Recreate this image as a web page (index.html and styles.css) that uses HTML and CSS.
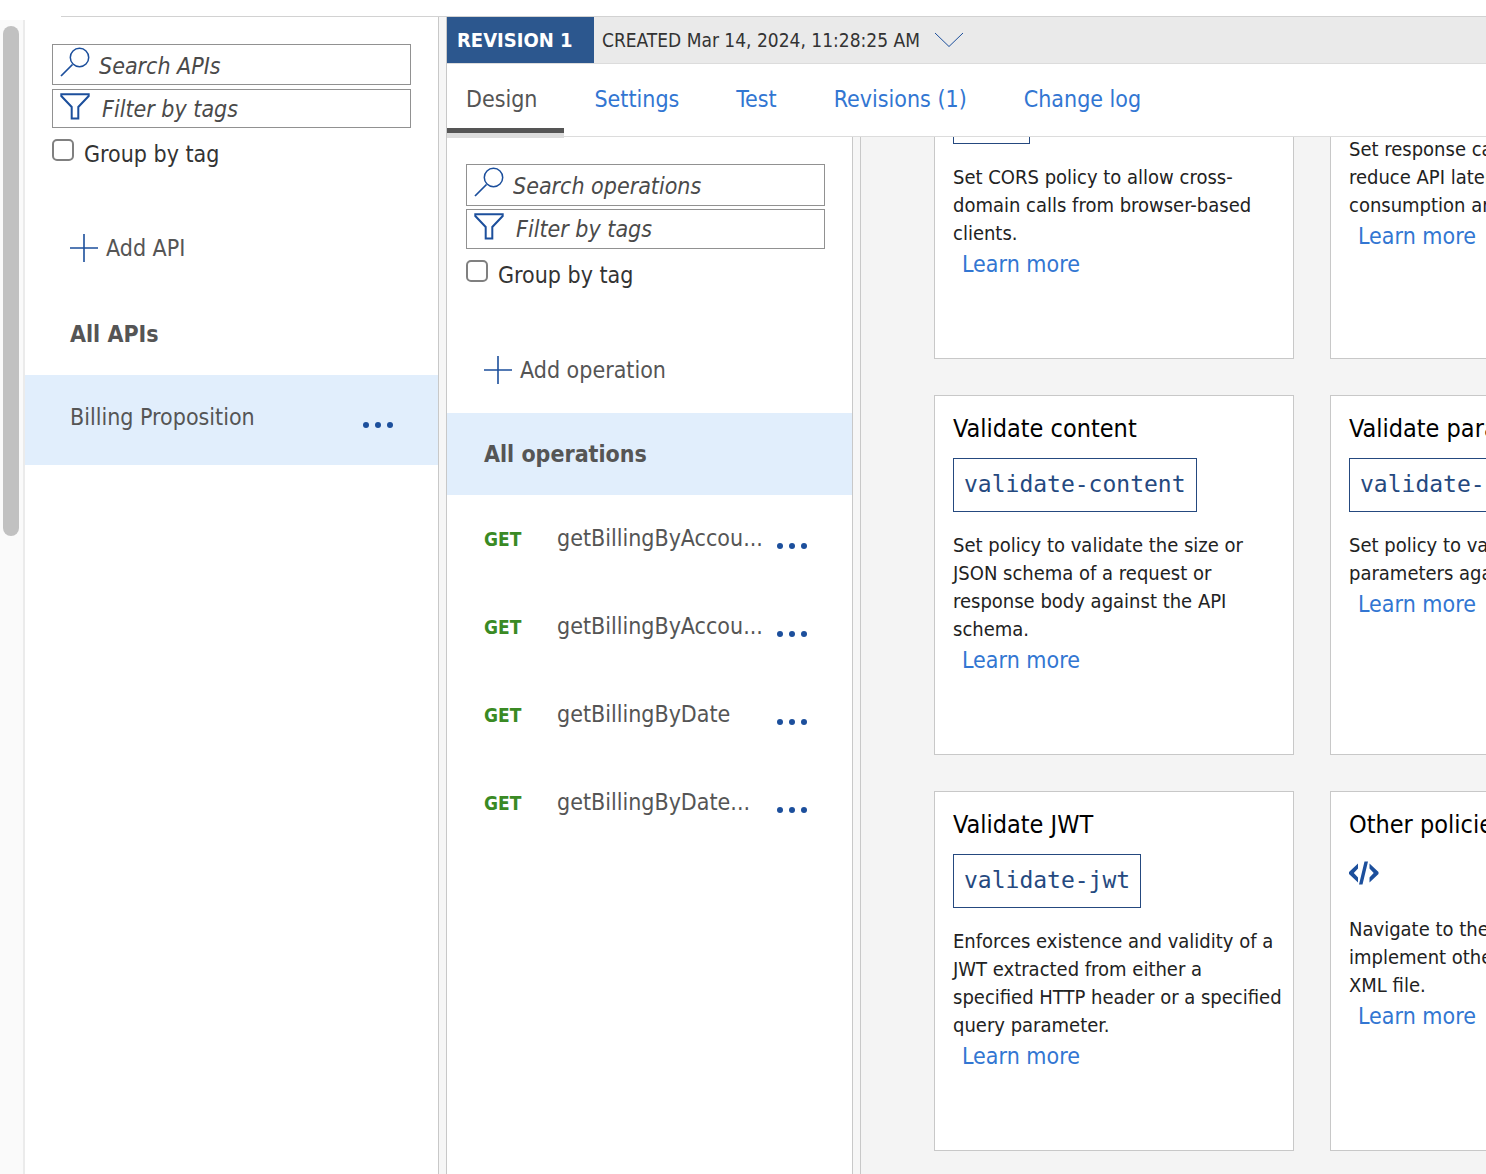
FILE: index.html
```
<!DOCTYPE html>
<html lang="en">
<head>
<meta charset="utf-8">
<title>API Management - APIs</title>
<link rel="stylesheet" href="styles.css">
</head>
<body>
<svg class="sprite" aria-hidden="true">
  <symbol id="search" viewBox="0 0 30 30"><path d="M1 29 12.500 17.500" stroke-width="1.700"/><circle cx="19.500" cy="10.500" r="9.200" stroke-width="1.500"/></symbol>
  <symbol id="filter" viewBox="0 0 30 30"><path d="M1.300 2.200H28.700V4L18.300 15V26.600H11.700V15L1.300 4Z" stroke-width="2"/></symbol>
  <symbol id="plus" viewBox="0 0 28 28"><path d="M14 0V28M0 14H28" stroke-width="1.600"/></symbol>
  <symbol id="dots" viewBox="0 0 30 6"><g class="fill"><circle cx="3" cy="3" r="3"/><circle cx="15" cy="3" r="3"/><circle cx="27" cy="3" r="3"/></g></symbol>
</svg>
<header class="topline"></header>
<div class="app">
  <div class="gutter"><div class="thumb"></div></div>
  <nav class="panel apis">
    <div class="filters">
      <label class="field"><svg class="icon"><use href="#search"/></svg><input type="text" placeholder="Search APIs" aria-label="Search APIs"></label>
      <label class="field tags"><svg class="icon"><use href="#filter"/></svg><input type="text" placeholder="Filter by tags" aria-label="Filter APIs by tags"></label>
      <label class="group"><input type="checkbox"><span>Group by tag</span></label>
    </div>
    <button class="add"><svg class="plus"><use href="#plus"/></svg>Add API</button>
    <a class="all" href="#">All APIs</a>
    <div class="row api selected"><a class="name" href="#">Billing Proposition</a><button class="more" aria-label="API actions"><svg><use href="#dots"/></svg></button></div>
  </nav>
  <div class="splitter"></div>
  <main class="main">
    <div class="revision">
      <strong>REVISION 1</strong>
      <button class="created">CREATED Mar 14, 2024, 11:28:25 AM <svg viewBox="0 0 30 16"><path d="M1 1 15 14.500 29 1" stroke-width="1"/></svg></button>
    </div>
    <div class="tabs">
      <a class="tab active" href="#">Design</a>
      <a class="tab" href="#">Settings</a>
      <a class="tab" href="#">Test</a>
      <a class="tab" href="#">Revisions (1)</a>
      <a class="tab" href="#">Change log</a>
    </div>
    <div class="work">
      <nav class="panel operations">
        <div class="filters">
          <label class="field"><svg class="icon"><use href="#search"/></svg><input type="text" placeholder="Search operations" aria-label="Search operations"></label>
          <label class="field tags"><svg class="icon"><use href="#filter"/></svg><input type="text" placeholder="Filter by tags" aria-label="Filter operations by tags"></label>
          <label class="group"><input type="checkbox"><span>Group by tag</span></label>
        </div>
        <button class="add"><svg class="plus"><use href="#plus"/></svg>Add operation</button>
        <a class="all selected" href="#">All operations</a>
        <div class="row"><span class="verb">GET</span><a class="name" href="#">getBillingByAccou...</a><button class="more" aria-label="Operation actions"><svg><use href="#dots"/></svg></button></div>
        <div class="row"><span class="verb">GET</span><a class="name" href="#">getBillingByAccou...</a><button class="more" aria-label="Operation actions"><svg><use href="#dots"/></svg></button></div>
        <div class="row"><span class="verb">GET</span><a class="name" href="#">getBillingByDate</a><button class="more" aria-label="Operation actions"><svg><use href="#dots"/></svg></button></div>
        <div class="row"><span class="verb">GET</span><a class="name" href="#">getBillingByDate...</a><button class="more" aria-label="Operation actions"><svg><use href="#dots"/></svg></button></div>
      </nav>
      <div class="splitter"></div>
      <section class="policies">
        <div class="cards">
          <article class="card">
            <h3>Allow cross-origin resource<br>sharing (CORS)</h3>
            <code>cors</code>
            <p>Set CORS policy to allow cross-<br>domain calls from browser-based<br>clients.</p>
            <a href="#">Learn more</a>
          </article>
          <article class="card">
            <h3>Cache responses</h3>
            <code>cache-lookup/store</code>
            <p>Set response caching policies to<br>reduce API latency, bandwidth<br>consumption and load times.</p>
            <a href="#">Learn more</a>
          </article>
          <article class="card">
            <h3>Validate content</h3>
            <code>validate-content</code>
            <p>Set policy to validate the size or<br>JSON schema of a request or<br>response body against the API<br>schema.</p>
            <a href="#">Learn more</a>
          </article>
          <article class="card">
            <h3>Validate parameters</h3>
            <code>validate-parameters</code>
            <p>Set policy to validate request<br>parameters against the schema.</p>
            <a href="#">Learn more</a>
          </article>
          <article class="card">
            <h3>Validate JWT</h3>
            <code>validate-jwt</code>
            <p>Enforces existence and validity of a<br>JWT extracted from either a<br>specified HTTP header or a specified<br>query parameter.</p>
            <a href="#">Learn more</a>
          </article>
          <article class="card">
            <h3>Other policies</h3>
            <svg class="xml" viewBox="0 0 30 24"><g class="fill"><path d="M9 2.500V7.500L4.800 12 9 16.500V21.500L0 13V11ZM20.500 2.500V7.500L24.700 12 20.500 16.500V21.500L29.500 13V11ZM15.500 0.500H19L13.500 23.500H10Z"/></g></svg>
            <p>Navigate to the policy editor to<br>implement other policies in the<br>XML file.</p>
            <a href="#">Learn more</a>
          </article>
        </div>
      </section>
    </div>
  </main>
</div>
</body>
</html>
```
FILE: styles.css
```
* { box-sizing: border-box; }
body {
  margin: 0;
  height: 100vh;
  overflow: hidden;
  display: flex;
  flex-direction: column;
  background: #fff;
  color: #555;
  font: 23px/28px "DejaVu Sans Condensed", Tahoma, "DejaVu Sans", sans-serif;
}
a { color: #3276d2; text-decoration: none; }
button { margin: 0; padding: 0; border: 0; background: none; color: inherit; font: inherit; }
svg { display: block; flex: none; fill: none; stroke: #1c4f9c; }
.sprite { position: absolute; width: 0; height: 0; }
.fill { fill: #1c4f9c; stroke: none; }

.topline { flex: none; height: 17px; margin-left: 61px; border-bottom: 1px solid #d2d2d2; }
.app { flex: 1; min-height: 0; display: flex; }
.gutter { flex: none; width: 25px; margin-top: 3px; padding: 6px 4px 0 3px; background: #fafafa; border-right: 2px solid #ebebeb; }
.thumb { width: 16px; height: 510px; border-radius: 8px; background: #c1c1c1; }
.splitter { flex: none; width: 9px; background: #f6f6f6; border: solid #c8c8c8; border-width: 0 1px; }

.panel { flex: none; display: flex; flex-direction: column; }
.apis { width: 413px; padding-top: 27px; }
.operations { width: 405px; padding-top: 27px; }
.filters { display: flex; flex-direction: column; gap: 3px; padding: 0 27px; }
.apis .filters { gap: 4px; }
.operations .filters { padding: 0 27px 0 19px; }
.field { display: flex; height: 42px; padding-left: 7px; border: 1px solid #919191; }
.tags { height: 40px; }
.apis .field { height: 41px; }
.apis .tags { height: 39px; }
.icon { width: 30px; height: 30px; margin-top: 2px; }
.field input { flex: 1; min-width: 0; padding: 2px 0 0 9px; border: 0; outline: 0; background: none; color: #333; font: inherit; }
.tags input { padding: 0 0 0 12px; }
.field input::placeholder { color: #4a4a4a; font-style: italic; opacity: 1; }
.group { display: flex; gap: 10px; margin-top: 7px; color: #333; }
.operations .group { margin-top: 8px; }
.group input { appearance: none; width: 22px; height: 22px; margin: 0; border: 2px solid #808080; border-radius: 5px; background: #fff; }
.group span { padding-top: 1px; }
.add { display: flex; align-items: center; gap: 8px; margin-top: 66px; padding-left: 45px; }
.operations .add { margin: 67px 0 29px; padding-left: 37px; }
.plus { width: 28px; height: 28px; }
.all { margin: 31px 0 0; padding: 27px 45px; color: #555; font-weight: bold; }
.operations .all { margin: 0; padding: 27px 37px; }
.selected { background: #e1eefc; }
.row { display: flex; align-items: center; height: 88px; padding: 0 45px 3px 37px; }
.api { height: 90px; padding: 0 45px 7px; }
.verb { width: 73px; padding-top: 2px; color: #3a8a24; font-size: 19px; font-weight: bold; }
.name { flex: 1; color: #555; white-space: nowrap; }
.more { padding-top: 16px; }
.more svg { width: 30px; height: 6px; }

.main { flex: 1; min-width: 0; display: flex; flex-direction: column; }
.revision { flex: none; display: flex; height: 47px; border-bottom: 1px solid #dcdcdc; background: #eaeaea; color: #333; font-size: 20px; line-height: 46px; }
.revision strong { width: 147px; padding-left: 10px; background: #2c578e; color: #fff; }
.created { display: flex; align-items: center; gap: 14px; padding-left: 8px; font-size: 19px; }
.created svg { width: 30px; height: 16px; }
.tabs { flex: none; display: flex; gap: 11px; height: 73px; border-bottom: 1px solid #dcdcdc; }
.tab { height: 74px; padding: 21px 27px 0 19px; white-space: nowrap; }
.active { height: 69px; color: #555; border-bottom: 5px solid #555; box-shadow: 0 5px #ddd; }

.work { flex: 1; min-height: 0; display: flex; }
.policies { flex: 1; min-width: 0; overflow: hidden; padding-left: 73px; background: #f4f4f4; }
/* the list is scrolled part of the way into its first row */
.cards { display: grid; grid-template-columns: 360px 360px; grid-auto-rows: 360px; gap: 36px; margin-top: -138px; }
.card { padding: 19px 18px; border: 1px solid #c8c8c8; background: #fff; color: #222; white-space: nowrap; overflow: hidden; }
.card h3 { margin: 0 0 15px; color: #000; font-size: 25px; font-weight: normal; line-height: 28px; }
.card code { display: inline-block; height: 54px; padding: 11px 10px; border: 1px solid #25497f; color: #25497f; font: 23px/28px "DejaVu Sans Mono", monospace; vertical-align: top; }
.card p { margin: 19px 0 2px; font-size: 20px; line-height: 28px; }
.card a { display: block; padding-left: 9px; line-height: 30px; }
.xml { width: 30px; height: 24px; margin: 22px 0 30px; }
```
